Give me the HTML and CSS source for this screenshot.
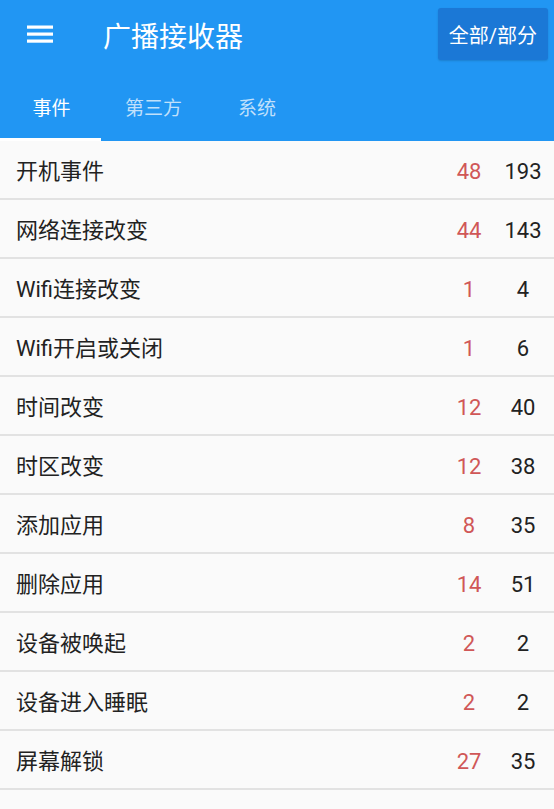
FILE: index.html
```html
<!DOCTYPE html>
<html lang="zh-CN">
<head>
<meta charset="utf-8">
<link rel="stylesheet" href="styles.css">
</head>
<body>
<header class="appbar">
  <div class="toolbar">
    <svg class="menu" width="26" height="20" viewBox="0 0 26 20"><rect x="0" y="1.5" width="26" height="3.2" fill="#fff"/><rect x="0" y="8.5" width="26" height="3.2" fill="#fff"/><rect x="0" y="15.5" width="26" height="3.2" fill="#fff"/></svg>
    <div class="title">广播接收器</div>
    <div class="btn">全部/部分</div>
  </div>
  <nav class="tabs">
    <div class="tab active">事件</div>
    <div class="tab">第三方</div>
    <div class="tab">系统</div>
  </nav>
</header>
<main class="list">
  <div class="row"><span class="name">开机事件</span><span class="num red">48</span><span class="num">193</span></div>
  <div class="row"><span class="name">网络连接改变</span><span class="num red">44</span><span class="num">143</span></div>
  <div class="row"><span class="name">Wifi连接改变</span><span class="num red">1</span><span class="num">4</span></div>
  <div class="row"><span class="name">Wifi开启或关闭</span><span class="num red">1</span><span class="num">6</span></div>
  <div class="row"><span class="name">时间改变</span><span class="num red">12</span><span class="num">40</span></div>
  <div class="row"><span class="name">时区改变</span><span class="num red">12</span><span class="num">38</span></div>
  <div class="row"><span class="name">添加应用</span><span class="num red">8</span><span class="num">35</span></div>
  <div class="row"><span class="name">删除应用</span><span class="num red">14</span><span class="num">51</span></div>
  <div class="row"><span class="name">设备被唤起</span><span class="num red">2</span><span class="num">2</span></div>
  <div class="row"><span class="name">设备进入睡眠</span><span class="num red">2</span><span class="num">2</span></div>
  <div class="row"><span class="name">屏幕解锁</span><span class="num red">27</span><span class="num">35</span></div>
</main>
</body>
</html>
```
FILE: styles.css
```css
* { box-sizing: border-box; }
html, body { margin: 0; padding: 0; }
body {
  width: 554px;
  height: 809px;
  overflow: hidden;
  background: #fafafa;
  font-family: Roboto, "Noto Sans CJK SC", sans-serif;
  color: #222;
}
.appbar {
  background: #2196f3;
  height: 141px;
  display: flex;
  flex-direction: column;
}
.toolbar {
  height: 72px;
  display: flex;
  align-items: center;
  padding: 0 6px 0 27px;
}
.menu { display: block; margin-top: -4px; }
.title {
  color: #fff;
  font-size: 28px;
  margin-left: 50px;
  flex: 1;
  margin-top: -2px;
}
.btn {
  align-self: flex-start;
  margin-top: 8px;
  width: 110px;
  height: 52px;
  background: #1b78d6;
  border-radius: 3px;
  color: #fff;
  font-size: 20px;
  display: flex;
  align-items: center;
  justify-content: center;
  box-shadow: 0 1px 2px rgba(0,0,0,0.15);
}
.tabs {
  flex: 1;
  display: flex;
}
.tab {
  color: rgba(255,255,255,0.72);
  font-size: 19px;
  display: flex;
  align-items: center;
  justify-content: center;
  border-bottom: 3px solid transparent;
  padding-top: 2px;
}
.tab:nth-child(1) { width: 101px; padding-left: 2px; }
.tab:nth-child(2) { padding-left: 24px; width: 137px; justify-content: flex-start; }
.tab.active {
  color: #fff;
  border-bottom-color: #fff;
}
.list { display: flex; flex-direction: column; }
.row {
  height: 59px;
  border-bottom: 2px solid #e2e2e2;
  display: flex;
  align-items: center;
  padding: 0 4px 0 16px;
  font-size: 22px;
}
.name { flex: 1; margin-top: -1px; }
.num {
  width: 54px;
  text-align: center;
  font-size: 22px;
  padding-top: 3px;
}
.num.red { color: #d05757; }
```
